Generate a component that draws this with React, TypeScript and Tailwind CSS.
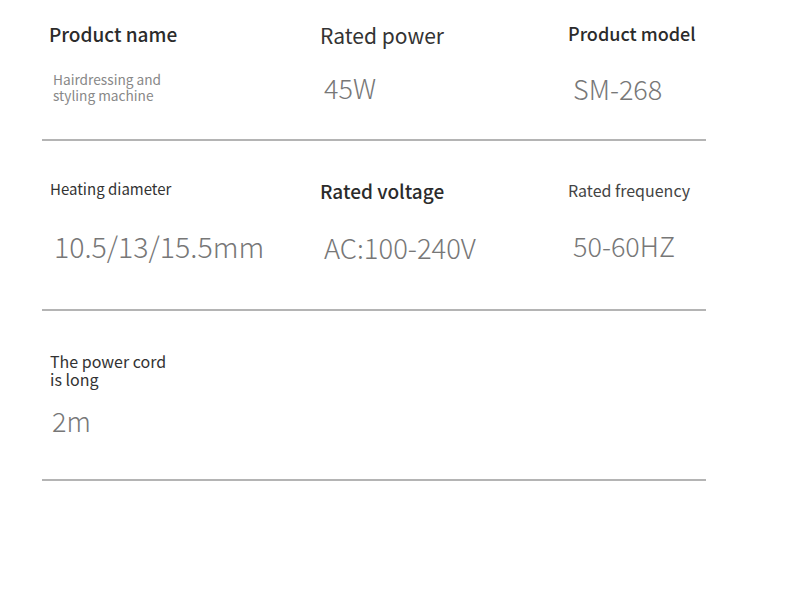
// Spec sheet for a hair styling machine

const font = { fontFamily: '"Noto Sans CJK SC", "Noto Sans", sans-serif' };

export default function App() {
  return (
    <main className="w-[790px] h-[592px] bg-white" style={font}>
      <div className="ml-[42px] w-[664px]">
        {/* Row 1 */}
        <div className="h-[141px] border-b-2 border-[#b4b4b4] flex">
          <div className="w-[278px] pl-[7px] pt-[22px]">
            <h3 className="text-[19px] leading-[24px] font-medium text-[#2b2b2b]">Product name</h3>
            <p className="mt-[25px] ml-[4px] text-[13.7px] text-[#888]">
              <span className="block leading-[16px]">Hairdressing and</span>
              <span className="block leading-[16px]">styling machine</span>
            </p>
          </div>
          <div className="w-[248px] pt-[22px]">
            <h3 className="text-[21px] leading-[26px] text-[#333]">Rated power</h3>
            <p className="mt-[24px] ml-[4px] text-[27px] leading-[32px] font-light text-[#777]">45W</p>
          </div>
          <div className="flex-1 pt-[21px]">
            <h3 className="text-[18px] leading-[24px] font-medium text-[#2b2b2b]">Product model</h3>
            <p className="mt-[28px] ml-[5px] text-[27px] leading-[32px] font-light text-[#777]">SM-268</p>
          </div>
        </div>

        {/* Row 2 */}
        <div className="h-[170px] border-b-2 border-[#b4b4b4] flex">
          <div className="w-[278px] pl-[8px] pt-[38px]">
            <h3 className="text-[15px] leading-[20px] text-[#333]">Heating diameter</h3>
            <p className="mt-[29px] ml-[4px] text-[28.5px] leading-[36px] font-light text-[#777]">10.5/13/15.5mm</p>
          </div>
          <div className="w-[248px] pt-[38px]">
            <h3 className="text-[19px] leading-[24px] font-medium text-[#2b2b2b]">Rated voltage</h3>
            <p className="mt-[26px] ml-[4px] text-[27.4px] leading-[36px] font-light text-[#777]">AC:100-240V</p>
          </div>
          <div className="flex-1 pt-[38px]">
            <h3 className="text-[16px] leading-[22px] text-[#444]">Rated frequency</h3>
            <p className="mt-[27px] ml-[5px] text-[27px] leading-[36px] font-light text-[#777]">50-60HZ</p>
          </div>
        </div>

        {/* Row 3 */}
        <div className="h-[170px] border-b-2 border-[#b4b4b4] flex">
          <div className="w-[278px] pl-[8px] pt-[41px]">
            <h3 className="text-[16px] text-[#333]">
              <span className="block leading-[18px]">The power cord</span>
              <span className="block leading-[18px]">is long</span>
            </h3>
            <p className="mt-[15px] ml-[2px] text-[27px] leading-[36px] font-light text-[#777]">2m</p>
          </div>
        </div>
      </div>
    </main>
  );
}
